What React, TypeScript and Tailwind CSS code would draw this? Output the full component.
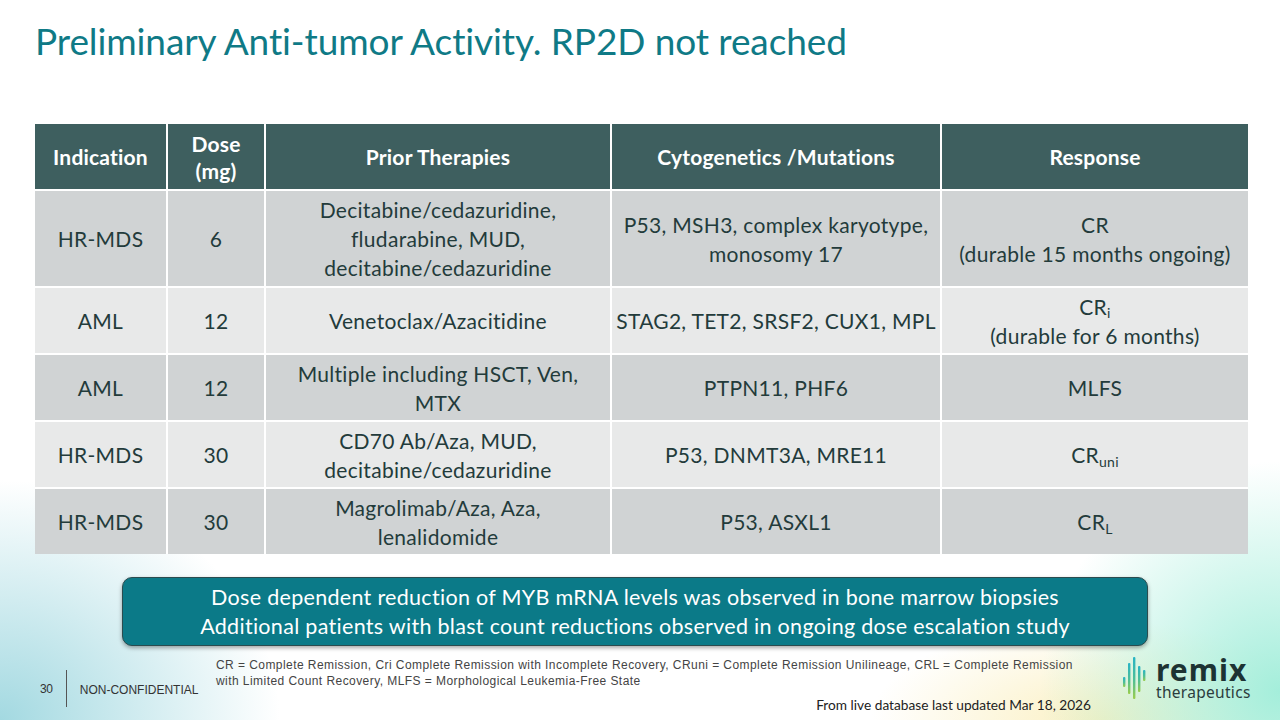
import React from 'react'

type Row = {
  indication: string
  dose: string
  prior: React.ReactNode
  cyto: React.ReactNode
  response: React.ReactNode
  tall?: boolean
}

const rows: Row[] = [
  {
    indication: 'HR-MDS',
    dose: '6',
    prior: (
      <>
        Decitabine/cedazuridine,
        <br />
        fludarabine, MUD,
        <br />
        decitabine/cedazuridine
      </>
    ),
    cyto: (
      <>
        P53, MSH3, complex karyotype,
        <br />
        monosomy 17
      </>
    ),
    response: (
      <>
        CR
        <br />
        (durable 15 months ongoing)
      </>
    ),
    tall: true,
  },
  {
    indication: 'AML',
    dose: '12',
    prior: 'Venetoclax/Azacitidine',
    cyto: 'STAG2, TET2, SRSF2, CUX1, MPL',
    response: (
      <>
        CR<sub className="text-[14px]">i</sub>
        <br />
        (durable for 6 months)
      </>
    ),
  },
  {
    indication: 'AML',
    dose: '12',
    prior: (
      <>
        Multiple including HSCT, Ven,
        <br />
        MTX
      </>
    ),
    cyto: 'PTPN11, PHF6',
    response: 'MLFS',
  },
  {
    indication: 'HR-MDS',
    dose: '30',
    prior: (
      <>
        CD70 Ab/Aza, MUD,
        <br />
        decitabine/cedazuridine
      </>
    ),
    cyto: 'P53, DNMT3A, MRE11',
    response: (
      <>
        CR<sub className="text-[14px]">uni</sub>
      </>
    ),
  },
  {
    indication: 'HR-MDS',
    dose: '30',
    prior: (
      <>
        Magrolimab/Aza, Aza,
        <br />
        lenalidomide
      </>
    ),
    cyto: 'P53, ASXL1',
    response: (
      <>
        CR<sub className="text-[14px]">L</sub>
      </>
    ),
  },
]

const headers = [
  'Indication',
  <>
    Dose
    <br />
    (mg)
  </>,
  'Prior Therapies',
  'Cytogenetics /Mutations',
  'Response',
]

function RemixLogo() {
  return (
    <div className="flex items-center gap-[9px]">
      <svg width="26" height="46" viewBox="0 0 26 46">
        <defs>
          <linearGradient id="bars" x1="0" y1="0" x2="0" y2="1">
            <stop offset="0" stopColor="#27b4c6" />
            <stop offset="0.55" stopColor="#4fbf96" />
            <stop offset="1" stopColor="#9ccd4a" />
          </linearGradient>
        </defs>
        <rect x="2" y="21" width="2.4" height="10" rx="1" fill="url(#bars)" />
        <rect x="7" y="7" width="2.4" height="31" rx="1" fill="url(#bars)" />
        <rect x="12" y="1" width="2.4" height="42" rx="1" fill="url(#bars)" />
        <rect x="17" y="10" width="2.4" height="26" rx="1" fill="url(#bars)" />
        <rect x="22" y="14" width="2.4" height="11" rx="1" fill="url(#bars)" />
      </svg>
      <div className="flex flex-col items-start font-['Noto_Sans',sans-serif] text-[#1d3333]">
        <span className="text-[30px] font-bold leading-[24px] tracking-[1px]">remix</span>
        <span className="mt-[2px] text-[15.5px] leading-[16px] tracking-[0.3px] text-[#2b3d3d]">therapeutics</span>
      </div>
    </div>
  )
}

export default function App() {
  return (
    <div className="w-[1280px] h-[720px] overflow-hidden bg-white bg-[image:radial-gradient(ellipse_280px_240px_at_0%_100%,#a3d9e1,rgba(255,255,255,0)),radial-gradient(ellipse_240px_230px_at_100%_96%,#a4eedb,rgba(255,255,255,0)),radial-gradient(ellipse_230px_100px_at_86%_100%,#fbf0c2,rgba(255,255,255,0))] font-['Lato',sans-serif] flex flex-col">
      <h1 className="pl-[35px] pt-[19px] text-[37px] leading-[44px] text-[#0f7a86] tracking-[-0.1px]">
        Preliminary Anti-tumor Activity. RP2D not reached
      </h1>

      <div className="ml-[35px] mt-[61px] w-[1213px] grid grid-cols-[131px_96px_344px_328px_306px] gap-[2px] bg-white text-[21px] leading-[29px] tracking-[0.3px] text-[#233b3b] text-center">
        {headers.map((h, i) => (
          <div
            key={i}
            className="h-[65px] bg-[#3e5f5f] text-white font-bold flex items-center justify-center leading-[27px] tracking-[0.2px]"
          >
            <div>{h}</div>
          </div>
        ))}
        {rows.map((r, ri) => {
          const bg = ri % 2 === 0 ? 'bg-[#d0d3d4]' : 'bg-[#e8e9e9]'
          const h = r.tall ? 'h-[95px]' : 'h-[65px]'
          return [r.indication, r.dose, r.prior, r.cyto, r.response].map((c, ci) => (
            <div key={`${ri}-${ci}`} className={`${bg} ${h} flex items-center justify-center`}>
              <div>{c}</div>
            </div>
          ))
        })}
      </div>

      <div className="ml-[122px] mt-[23px] w-[1026px] h-[69px] rounded-[10px] border border-[#2b4c4f] bg-[#0b7a88] shadow-[0_2px_4px_rgba(0,0,0,0.35)] flex flex-col items-center justify-center text-white text-[21.5px] leading-[29px] tracking-[0.3px]">
        <div>Dose dependent reduction of MYB mRNA levels was observed in bone marrow biopsies</div>
        <div>Additional patients with blast count reductions observed in ongoing dose escalation study</div>
      </div>

      <div className="mt-[9px] flex">
        <div className="w-[216px] pl-[40px] pt-[9px] flex items-center font-['Liberation_Sans',sans-serif] text-[12px] text-[#333]">
          <span className="tracking-[-0.3px]">30</span>
          <div className="ml-[13px] w-px h-[37px] bg-[#555]" />
          <span className="ml-[13px] pt-[2px]">NON-CONFIDENTIAL</span>
        </div>
        <div className="w-[875px] flex flex-col">
          <p className="pt-[2px] font-['Liberation_Sans',sans-serif] text-[12px] leading-[16px] text-[#444] tracking-[0.44px] whitespace-nowrap">
            CR = Complete Remission, Cri Complete Remission with Incomplete Recovery, CRuni = Complete Remission Unilineage, CRL = Complete Remission
            <br />
            with Limited Count Recovery, MLFS = Morphological Leukemia-Free State
          </p>
          <p className="mt-[8px] text-right text-[13.7px] leading-[16px] text-[#222]">
            From live database last updated Mar 18, 2026
          </p>
        </div>
        <div className="ml-[30px] mt-[1px]">
          <RemixLogo />
        </div>
      </div>
    </div>
  )
}
